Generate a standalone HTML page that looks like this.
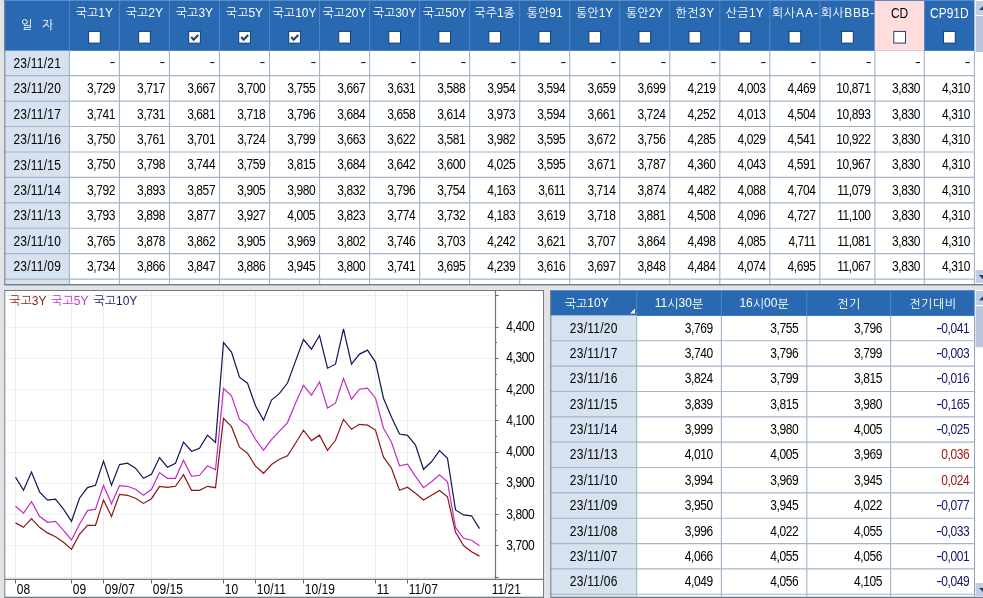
<!DOCTYPE html>
<html lang="ko"><head><meta charset="utf-8"><title>채권 금리</title>
<style>
html,body{margin:0;padding:0}
body{width:983px;height:598px;overflow:hidden;background:#e1e3e7;position:relative;font-family:"Liberation Sans","NanumGothic",sans-serif;font-size:12px;color:#000}
#w{position:absolute;left:0;top:0;width:983px;height:598px;will-change:transform}
#w>div,#w>svg{position:absolute}
.t{white-space:nowrap;overflow:visible;transform:scaleY(1.2)}
.k{transform:none}
.e{display:inline-block;transform:scaleY(1.14);transform-origin:50% 80%}
.hc{text-align:center;color:#fff}
.dk{color:#000}
.c{text-align:center}
.r{text-align:right}
.l{text-align:left}
.n{letter-spacing:-0.4px}
.m{display:inline-block;transform:scaleX(1.5);transform-origin:100% 50%;position:relative;top:-0.5px}
.d{letter-spacing:0.25px}
</style></head><body><div id="w">
<svg style="left:0;top:0" width="983" height="598" viewBox="0 0 983 598"><rect x="4.30" y="0.00" width="978.70" height="285.00" fill="#fff" />
<rect x="4.30" y="0.00" width="970.10" height="50.80" fill="#2969b1" />
<line x1="4.30" x2="974.40" y1="0.50" y2="0.50" stroke="#5b8cc6" stroke-width="1"/>
<rect x="4.30" y="50.80" width="65.10" height="233.50" fill="#d6e2ef" />
<line x1="69.40" x2="69.40" y1="1.00" y2="50.80" stroke="#4f86c6" stroke-width="1"/>
<line x1="119.43" x2="119.43" y1="1.00" y2="50.80" stroke="#4f86c6" stroke-width="1"/>
<line x1="169.46" x2="169.46" y1="1.00" y2="50.80" stroke="#4f86c6" stroke-width="1"/>
<line x1="219.49" x2="219.49" y1="1.00" y2="50.80" stroke="#4f86c6" stroke-width="1"/>
<line x1="269.52" x2="269.52" y1="1.00" y2="50.80" stroke="#4f86c6" stroke-width="1"/>
<line x1="319.55" x2="319.55" y1="1.00" y2="50.80" stroke="#4f86c6" stroke-width="1"/>
<line x1="369.58" x2="369.58" y1="1.00" y2="50.80" stroke="#4f86c6" stroke-width="1"/>
<line x1="419.61" x2="419.61" y1="1.00" y2="50.80" stroke="#4f86c6" stroke-width="1"/>
<line x1="469.64" x2="469.64" y1="1.00" y2="50.80" stroke="#4f86c6" stroke-width="1"/>
<line x1="519.67" x2="519.67" y1="1.00" y2="50.80" stroke="#4f86c6" stroke-width="1"/>
<line x1="569.70" x2="569.70" y1="1.00" y2="50.80" stroke="#4f86c6" stroke-width="1"/>
<line x1="619.73" x2="619.73" y1="1.00" y2="50.80" stroke="#4f86c6" stroke-width="1"/>
<line x1="669.76" x2="669.76" y1="1.00" y2="50.80" stroke="#4f86c6" stroke-width="1"/>
<line x1="719.79" x2="719.79" y1="1.00" y2="50.80" stroke="#4f86c6" stroke-width="1"/>
<line x1="769.82" x2="769.82" y1="1.00" y2="50.80" stroke="#4f86c6" stroke-width="1"/>
<line x1="819.85" x2="819.85" y1="1.00" y2="50.80" stroke="#4f86c6" stroke-width="1"/>
<line x1="874.90" x2="874.90" y1="1.00" y2="50.80" stroke="#4f86c6" stroke-width="1"/>
<line x1="924.30" x2="924.30" y1="1.00" y2="50.80" stroke="#4f86c6" stroke-width="1"/>
<rect x="874.70" y="1.00" width="49.40" height="49.80" fill="#ffdddd" />
<line x1="69.40" x2="69.40" y1="50.80" y2="284.30" stroke="#a2b5c9" stroke-width="1.15"/>
<line x1="119.43" x2="119.43" y1="50.80" y2="284.30" stroke="#a2b5c9" stroke-width="1.15"/>
<line x1="169.46" x2="169.46" y1="50.80" y2="284.30" stroke="#a2b5c9" stroke-width="1.15"/>
<line x1="219.49" x2="219.49" y1="50.80" y2="284.30" stroke="#a2b5c9" stroke-width="1.15"/>
<line x1="269.52" x2="269.52" y1="50.80" y2="284.30" stroke="#a2b5c9" stroke-width="1.15"/>
<line x1="319.55" x2="319.55" y1="50.80" y2="284.30" stroke="#a2b5c9" stroke-width="1.15"/>
<line x1="369.58" x2="369.58" y1="50.80" y2="284.30" stroke="#a2b5c9" stroke-width="1.15"/>
<line x1="419.61" x2="419.61" y1="50.80" y2="284.30" stroke="#a2b5c9" stroke-width="1.15"/>
<line x1="469.64" x2="469.64" y1="50.80" y2="284.30" stroke="#a2b5c9" stroke-width="1.15"/>
<line x1="519.67" x2="519.67" y1="50.80" y2="284.30" stroke="#a2b5c9" stroke-width="1.15"/>
<line x1="569.70" x2="569.70" y1="50.80" y2="284.30" stroke="#a2b5c9" stroke-width="1.15"/>
<line x1="619.73" x2="619.73" y1="50.80" y2="284.30" stroke="#a2b5c9" stroke-width="1.15"/>
<line x1="669.76" x2="669.76" y1="50.80" y2="284.30" stroke="#a2b5c9" stroke-width="1.15"/>
<line x1="719.79" x2="719.79" y1="50.80" y2="284.30" stroke="#a2b5c9" stroke-width="1.15"/>
<line x1="769.82" x2="769.82" y1="50.80" y2="284.30" stroke="#a2b5c9" stroke-width="1.15"/>
<line x1="819.85" x2="819.85" y1="50.80" y2="284.30" stroke="#a2b5c9" stroke-width="1.15"/>
<line x1="874.90" x2="874.90" y1="50.80" y2="284.30" stroke="#a2b5c9" stroke-width="1.15"/>
<line x1="924.30" x2="924.30" y1="50.80" y2="284.30" stroke="#a2b5c9" stroke-width="1.15"/>
<line x1="974.40" x2="974.40" y1="50.80" y2="284.30" stroke="#a2b5c9" stroke-width="1.15"/>
<line x1="4.30" x2="974.90" y1="75.68" y2="75.68" stroke="#a2b5c9" stroke-width="1.15"/>
<line x1="4.30" x2="974.90" y1="101.11" y2="101.11" stroke="#a2b5c9" stroke-width="1.15"/>
<line x1="4.30" x2="974.90" y1="126.54" y2="126.54" stroke="#a2b5c9" stroke-width="1.15"/>
<line x1="4.30" x2="974.90" y1="151.97" y2="151.97" stroke="#a2b5c9" stroke-width="1.15"/>
<line x1="4.30" x2="974.90" y1="177.40" y2="177.40" stroke="#a2b5c9" stroke-width="1.15"/>
<line x1="4.30" x2="974.90" y1="202.83" y2="202.83" stroke="#a2b5c9" stroke-width="1.15"/>
<line x1="4.30" x2="974.90" y1="228.26" y2="228.26" stroke="#a2b5c9" stroke-width="1.15"/>
<line x1="4.30" x2="974.90" y1="253.69" y2="253.69" stroke="#a2b5c9" stroke-width="1.15"/>
<line x1="4.30" x2="974.90" y1="279.12" y2="279.12" stroke="#a2b5c9" stroke-width="1.15"/>
<line x1="4.80" x2="4.80" y1="0.00" y2="285.00" stroke="#6d7b8b" stroke-width="1"/>
<rect x="4.30" y="284.00" width="978.70" height="1.40" fill="#6d7b8b" />
<rect x="88.62" y="31.40" width="11.7" height="11.7" fill="#fff" stroke="#173c70" stroke-width="1"/>
<rect x="138.64" y="31.40" width="11.7" height="11.7" fill="#fff" stroke="#173c70" stroke-width="1"/>
<rect x="188.68" y="31.40" width="11.7" height="11.7" fill="#fff" stroke="#173c70" stroke-width="1"/>
<path d="M191.18 37.10 l2.4 2.6 l4.6 -4.8" fill="none" stroke="#1d4576" stroke-width="2.2"/>
<rect x="238.70" y="31.40" width="11.7" height="11.7" fill="#fff" stroke="#173c70" stroke-width="1"/>
<path d="M241.20 37.10 l2.4 2.6 l4.6 -4.8" fill="none" stroke="#1d4576" stroke-width="2.2"/>
<rect x="288.73" y="31.40" width="11.7" height="11.7" fill="#fff" stroke="#173c70" stroke-width="1"/>
<path d="M291.23 37.10 l2.4 2.6 l4.6 -4.8" fill="none" stroke="#1d4576" stroke-width="2.2"/>
<rect x="338.77" y="31.40" width="11.7" height="11.7" fill="#fff" stroke="#173c70" stroke-width="1"/>
<rect x="388.80" y="31.40" width="11.7" height="11.7" fill="#fff" stroke="#173c70" stroke-width="1"/>
<rect x="438.82" y="31.40" width="11.7" height="11.7" fill="#fff" stroke="#173c70" stroke-width="1"/>
<rect x="488.85" y="31.40" width="11.7" height="11.7" fill="#fff" stroke="#173c70" stroke-width="1"/>
<rect x="538.88" y="31.40" width="11.7" height="11.7" fill="#fff" stroke="#173c70" stroke-width="1"/>
<rect x="588.92" y="31.40" width="11.7" height="11.7" fill="#fff" stroke="#173c70" stroke-width="1"/>
<rect x="638.95" y="31.40" width="11.7" height="11.7" fill="#fff" stroke="#173c70" stroke-width="1"/>
<rect x="688.98" y="31.40" width="11.7" height="11.7" fill="#fff" stroke="#173c70" stroke-width="1"/>
<rect x="739.01" y="31.40" width="11.7" height="11.7" fill="#fff" stroke="#173c70" stroke-width="1"/>
<rect x="789.04" y="31.40" width="11.7" height="11.7" fill="#fff" stroke="#173c70" stroke-width="1"/>
<rect x="841.58" y="31.40" width="11.7" height="11.7" fill="#fff" stroke="#173c70" stroke-width="1"/>
<rect x="893.80" y="31.40" width="11.7" height="11.7" fill="#fff" stroke="#1f3f6e" stroke-width="1"/>
<rect x="943.55" y="31.40" width="11.7" height="11.7" fill="#fff" stroke="#173c70" stroke-width="1"/>
<rect x="975.60" y="1.00" width="8.00" height="283.00" fill="#fff" />
<rect x="975.60" y="1.00" width="8.00" height="14.00" fill="#c3cce0" />
<rect x="975.60" y="16.00" width="8.00" height="36.00" fill="#b9c5dc" />
<rect x="975.60" y="270.00" width="8.00" height="13.00" fill="#c3cce0" />
<path d="M979 10 L983.5 5.5 L983.5 10 Z" fill="#2b3f63"/>
<path d="M978.7 275 L983.5 275 L983.5 279.8 Z" fill="#2b3f63"/>
<rect x="4.30" y="290.00" width="539.70" height="307.60" fill="#fff" />
<line x1="6" x2="494.5" y1="577.5" y2="577.5" stroke="#e2e2e2" stroke-width="1" stroke-dasharray="1 1" shape-rendering="crispEdges"/>
<line x1="6" x2="494.5" y1="545.5" y2="545.5" stroke="#e2e2e2" stroke-width="1" stroke-dasharray="1 1" shape-rendering="crispEdges"/>
<line x1="6" x2="494.5" y1="514.5" y2="514.5" stroke="#e2e2e2" stroke-width="1" stroke-dasharray="1 1" shape-rendering="crispEdges"/>
<line x1="6" x2="494.5" y1="483.5" y2="483.5" stroke="#e2e2e2" stroke-width="1" stroke-dasharray="1 1" shape-rendering="crispEdges"/>
<line x1="6" x2="494.5" y1="452.5" y2="452.5" stroke="#e2e2e2" stroke-width="1" stroke-dasharray="1 1" shape-rendering="crispEdges"/>
<line x1="6" x2="494.5" y1="420.5" y2="420.5" stroke="#e2e2e2" stroke-width="1" stroke-dasharray="1 1" shape-rendering="crispEdges"/>
<line x1="6" x2="494.5" y1="389.5" y2="389.5" stroke="#e2e2e2" stroke-width="1" stroke-dasharray="1 1" shape-rendering="crispEdges"/>
<line x1="6" x2="494.5" y1="358.5" y2="358.5" stroke="#e2e2e2" stroke-width="1" stroke-dasharray="1 1" shape-rendering="crispEdges"/>
<line x1="6" x2="494.5" y1="327.5" y2="327.5" stroke="#e2e2e2" stroke-width="1" stroke-dasharray="1 1" shape-rendering="crispEdges"/>
<line x1="6" x2="494.5" y1="295.5" y2="295.5" stroke="#e2e2e2" stroke-width="1" stroke-dasharray="1 1" shape-rendering="crispEdges"/>
<line x1="15.50" x2="15.50" y1="291.00" y2="579.30" stroke="#ebebeb" stroke-width="1"/>
<line x1="15.50" x2="15.50" y1="579.30" y2="583.50" stroke="#666" stroke-width="1"/>
<line x1="71.50" x2="71.50" y1="291.00" y2="579.30" stroke="#ebebeb" stroke-width="1"/>
<line x1="71.50" x2="71.50" y1="579.30" y2="583.50" stroke="#666" stroke-width="1"/>
<line x1="103.50" x2="103.50" y1="291.00" y2="579.30" stroke="#ebebeb" stroke-width="1"/>
<line x1="103.50" x2="103.50" y1="579.30" y2="583.50" stroke="#666" stroke-width="1"/>
<line x1="151.50" x2="151.50" y1="291.00" y2="579.30" stroke="#ebebeb" stroke-width="1"/>
<line x1="151.50" x2="151.50" y1="579.30" y2="583.50" stroke="#666" stroke-width="1"/>
<line x1="223.50" x2="223.50" y1="291.00" y2="579.30" stroke="#ebebeb" stroke-width="1"/>
<line x1="223.50" x2="223.50" y1="579.30" y2="583.50" stroke="#666" stroke-width="1"/>
<line x1="255.50" x2="255.50" y1="291.00" y2="579.30" stroke="#ebebeb" stroke-width="1"/>
<line x1="255.50" x2="255.50" y1="579.30" y2="583.50" stroke="#666" stroke-width="1"/>
<line x1="303.50" x2="303.50" y1="291.00" y2="579.30" stroke="#ebebeb" stroke-width="1"/>
<line x1="303.50" x2="303.50" y1="579.30" y2="583.50" stroke="#666" stroke-width="1"/>
<line x1="375.50" x2="375.50" y1="291.00" y2="579.30" stroke="#ebebeb" stroke-width="1"/>
<line x1="375.50" x2="375.50" y1="579.30" y2="583.50" stroke="#666" stroke-width="1"/>
<line x1="407.50" x2="407.50" y1="291.00" y2="579.30" stroke="#ebebeb" stroke-width="1"/>
<line x1="407.50" x2="407.50" y1="579.30" y2="583.50" stroke="#666" stroke-width="1"/>
<line x1="5.00" x2="543.00" y1="579.30" y2="579.30" stroke="#777" stroke-width="1.2"/>
<line x1="495.50" x2="495.50" y1="291.00" y2="579.30" stroke="#777" stroke-width="1.2"/>
<line x1="495.50" x2="498.70" y1="577.50" y2="577.50" stroke="#6a6a6a" stroke-width="1"/>
<line x1="495.50" x2="498.70" y1="545.50" y2="545.50" stroke="#6a6a6a" stroke-width="1"/>
<line x1="495.50" x2="497.00" y1="530.50" y2="530.50" stroke="#6a6a6a" stroke-width="1"/>
<line x1="495.50" x2="498.70" y1="514.50" y2="514.50" stroke="#6a6a6a" stroke-width="1"/>
<line x1="495.50" x2="497.00" y1="498.50" y2="498.50" stroke="#6a6a6a" stroke-width="1"/>
<line x1="495.50" x2="498.70" y1="483.50" y2="483.50" stroke="#6a6a6a" stroke-width="1"/>
<line x1="495.50" x2="497.00" y1="467.50" y2="467.50" stroke="#6a6a6a" stroke-width="1"/>
<line x1="495.50" x2="498.70" y1="452.50" y2="452.50" stroke="#6a6a6a" stroke-width="1"/>
<line x1="495.50" x2="497.00" y1="436.50" y2="436.50" stroke="#6a6a6a" stroke-width="1"/>
<line x1="495.50" x2="498.70" y1="420.50" y2="420.50" stroke="#6a6a6a" stroke-width="1"/>
<line x1="495.50" x2="497.00" y1="405.50" y2="405.50" stroke="#6a6a6a" stroke-width="1"/>
<line x1="495.50" x2="498.70" y1="389.50" y2="389.50" stroke="#6a6a6a" stroke-width="1"/>
<line x1="495.50" x2="497.00" y1="374.50" y2="374.50" stroke="#6a6a6a" stroke-width="1"/>
<line x1="495.50" x2="498.70" y1="358.50" y2="358.50" stroke="#6a6a6a" stroke-width="1"/>
<line x1="495.50" x2="497.00" y1="342.50" y2="342.50" stroke="#6a6a6a" stroke-width="1"/>
<line x1="495.50" x2="498.70" y1="327.50" y2="327.50" stroke="#6a6a6a" stroke-width="1"/>
<line x1="495.50" x2="498.70" y1="295.50" y2="295.50" stroke="#6a6a6a" stroke-width="1"/>
<polyline points="15.5,522.9 23.5,527.3 31.5,518.7 39.5,527.3 47.5,532.9 55.5,536.7 63.5,542.3 71.5,549.4 79.5,534.3 87.5,525.3 95.5,525.3 103.5,500.1 111.5,516.4 119.5,494.3 127.5,495.3 135.5,498.3 143.5,503.4 151.5,498.7 159.5,486.3 167.5,487.3 175.5,486.3 183.5,474.7 191.5,490.3 199.5,490.3 207.5,486.3 215.5,487.7 223.5,418.4 231.5,426.7 239.5,447.2 247.5,453.2 255.5,466.1 263.5,473.3 271.5,464.5 279.5,459.3 287.5,455.7 295.5,443.2 303.5,430.2 311.5,440.6 319.5,435.2 327.5,450.3 335.5,440.3 343.5,419.4 351.5,429.3 359.5,424.3 367.5,425.2 375.5,430.1 383.5,457.2 391.5,468.2 399.5,490.3 407.5,487.3 415.5,493.3 423.5,499.9 431.5,495.2 439.5,490.5 447.5,496.8 455.5,532.1 463.5,545.5 471.5,551.7 479.5,556.1" fill="none" stroke="#881818" stroke-width="1.2" stroke-linejoin="miter"/>
<polyline points="15.5,506.2 23.5,513.2 31.5,501.6 39.5,516.3 47.5,522.3 55.5,521.3 63.5,530.3 71.5,539.9 79.5,524.3 87.5,510.6 95.5,509.2 103.5,485.5 111.5,503.8 119.5,485.7 127.5,486.3 135.5,489.3 143.5,495.3 151.5,489.3 159.5,472.6 167.5,478.3 175.5,478.3 183.5,460.2 191.5,476.3 199.5,475.3 207.5,465.8 215.5,469.8 223.5,388.6 231.5,395.9 239.5,419.4 247.5,425.2 255.5,439.5 263.5,450.2 271.5,439.7 279.5,431.2 287.5,422.6 295.5,403.2 303.5,385.3 311.5,395.2 319.5,381.9 327.5,408.0 335.5,403.2 343.5,378.5 351.5,399.2 359.5,389.2 367.5,388.2 375.5,398.2 383.5,428.2 391.5,442.2 399.5,465.8 407.5,464.2 415.5,476.3 423.5,487.7 431.5,481.8 439.5,474.9 447.5,481.8 455.5,527.4 463.5,538.3 471.5,540.2 479.5,545.8" fill="none" stroke="#c22cc4" stroke-width="1.2" stroke-linejoin="miter"/>
<polyline points="15.5,477.1 23.5,490.2 31.5,472.1 39.5,491.8 47.5,500.2 55.5,499.2 63.5,509.2 71.5,521.3 79.5,498.2 87.5,487.6 95.5,485.2 103.5,461.1 111.5,485.3 119.5,464.6 127.5,463.2 135.5,468.2 143.5,478.3 151.5,474.3 159.5,457.6 167.5,467.2 175.5,463.2 183.5,442.1 191.5,451.2 199.5,448.2 207.5,435.1 215.5,442.5 223.5,342.5 231.5,352.1 239.5,377.2 247.5,383.2 255.5,405.7 263.5,420.1 271.5,400.0 279.5,393.4 287.5,383.0 295.5,361.1 303.5,339.5 311.5,349.1 319.5,335.5 327.5,368.2 335.5,364.2 343.5,329.0 351.5,364.1 359.5,354.1 367.5,350.1 375.5,362.1 383.5,398.2 391.5,417.2 399.5,434.0 407.5,435.4 415.5,445.0 423.5,469.3 431.5,461.8 439.5,450.6 447.5,458.4 455.5,509.9 463.5,514.9 471.5,515.8 479.5,528.6" fill="none" stroke="#151556" stroke-width="1.2" stroke-linejoin="miter"/>
<line x1="4.80" x2="4.80" y1="290.00" y2="597.60" stroke="#6d7b8b" stroke-width="1"/>
<line x1="543.50" x2="543.50" y1="290.00" y2="597.60" stroke="#6d7b8b" stroke-width="1"/>
<line x1="4.30" x2="544.00" y1="290.50" y2="290.50" stroke="#6d7b8b" stroke-width="1"/>
<rect x="4.30" y="596.70" width="539.70" height="1.30" fill="#6d7b8b" />
<rect x="550.30" y="290.00" width="432.70" height="307.60" fill="#fff" />
<rect x="550.30" y="290.00" width="424.30" height="25.90" fill="#2969b1" />
<line x1="550.30" x2="974.60" y1="290.50" y2="290.50" stroke="#5b8cc6" stroke-width="1"/>
<rect x="550.30" y="315.40" width="86.40" height="280.90" fill="#d6e2ef" />
<line x1="636.70" x2="636.70" y1="291.00" y2="315.40" stroke="#4f86c6" stroke-width="1"/>
<line x1="721.40" x2="721.40" y1="291.00" y2="315.40" stroke="#4f86c6" stroke-width="1"/>
<line x1="806.80" x2="806.80" y1="291.00" y2="315.40" stroke="#4f86c6" stroke-width="1"/>
<line x1="890.60" x2="890.60" y1="291.00" y2="315.40" stroke="#4f86c6" stroke-width="1"/>
<line x1="636.70" x2="636.70" y1="315.40" y2="596.30" stroke="#a2b5c9" stroke-width="1.15"/>
<line x1="721.40" x2="721.40" y1="315.40" y2="596.30" stroke="#a2b5c9" stroke-width="1.15"/>
<line x1="806.80" x2="806.80" y1="315.40" y2="596.30" stroke="#a2b5c9" stroke-width="1.15"/>
<line x1="890.60" x2="890.60" y1="315.40" y2="596.30" stroke="#a2b5c9" stroke-width="1.15"/>
<line x1="974.60" x2="974.60" y1="315.40" y2="596.30" stroke="#8a9bb0" stroke-width="1"/>
<line x1="550.30" x2="974.60" y1="340.75" y2="340.75" stroke="#a2b5c9" stroke-width="1.15"/>
<line x1="550.30" x2="974.60" y1="366.10" y2="366.10" stroke="#a2b5c9" stroke-width="1.15"/>
<line x1="550.30" x2="974.60" y1="391.45" y2="391.45" stroke="#a2b5c9" stroke-width="1.15"/>
<line x1="550.30" x2="974.60" y1="416.80" y2="416.80" stroke="#a2b5c9" stroke-width="1.15"/>
<line x1="550.30" x2="974.60" y1="442.15" y2="442.15" stroke="#a2b5c9" stroke-width="1.15"/>
<line x1="550.30" x2="974.60" y1="467.50" y2="467.50" stroke="#a2b5c9" stroke-width="1.15"/>
<line x1="550.30" x2="974.60" y1="492.85" y2="492.85" stroke="#a2b5c9" stroke-width="1.15"/>
<line x1="550.30" x2="974.60" y1="518.20" y2="518.20" stroke="#a2b5c9" stroke-width="1.15"/>
<line x1="550.30" x2="974.60" y1="543.55" y2="543.55" stroke="#a2b5c9" stroke-width="1.15"/>
<line x1="550.30" x2="974.60" y1="568.90" y2="568.90" stroke="#a2b5c9" stroke-width="1.15"/>
<line x1="550.30" x2="974.60" y1="594.25" y2="594.25" stroke="#a2b5c9" stroke-width="1.15"/>
<line x1="550.80" x2="550.80" y1="290.00" y2="597.60" stroke="#6d7b8b" stroke-width="1"/>
<rect x="550.30" y="596.70" width="432.70" height="1.30" fill="#6d7b8b" />
<path d="M630 313.5 L635 313.5 L635 308.5 Z" fill="#fff"/>
<rect x="975.60" y="291.00" width="8.00" height="305.30" fill="#fff" />
<rect x="975.60" y="291.00" width="8.00" height="14.00" fill="#c3cce0" />
<rect x="975.60" y="306.20" width="8.00" height="41.00" fill="#b9c5dc" />
<rect x="975.60" y="583.00" width="8.00" height="13.30" fill="#c3cce0" />
<path d="M979 300.2 L983.5 295.7 L983.5 300.2 Z" fill="#2b3f63"/>
<path d="M979 588 L983.5 588 L983.5 592.5 Z" fill="#2b3f63"/></svg>
<div class="t hc k" style="left:5.30px;top:12.30px;width:64.00px;height:26.00px;line-height:26.00px;word-spacing:6.5px;">일 자</div>
<div class="t hc k" style="left:59.40px;top:6.40px;width:70.03px;height:14.00px;line-height:14.00px;">국고<span class="e">1Y</span></div>
<div class="t hc k" style="left:109.43px;top:6.40px;width:70.03px;height:14.00px;line-height:14.00px;">국고<span class="e">2Y</span></div>
<div class="t hc k" style="left:159.46px;top:6.40px;width:70.03px;height:14.00px;line-height:14.00px;">국고<span class="e">3Y</span></div>
<div class="t hc k" style="left:209.49px;top:6.40px;width:70.03px;height:14.00px;line-height:14.00px;">국고<span class="e">5Y</span></div>
<div class="t hc k" style="left:259.52px;top:6.40px;width:70.03px;height:14.00px;line-height:14.00px;">국고<span class="e">10Y</span></div>
<div class="t hc k" style="left:309.55px;top:6.40px;width:70.03px;height:14.00px;line-height:14.00px;">국고<span class="e">20Y</span></div>
<div class="t hc k" style="left:359.58px;top:6.40px;width:70.03px;height:14.00px;line-height:14.00px;">국고<span class="e">30Y</span></div>
<div class="t hc k" style="left:409.61px;top:6.40px;width:70.03px;height:14.00px;line-height:14.00px;">국고<span class="e">50Y</span></div>
<div class="t hc k" style="left:459.64px;top:6.40px;width:70.03px;height:14.00px;line-height:14.00px;">국주<span class="e">1</span>종</div>
<div class="t hc k" style="left:509.67px;top:6.40px;width:70.03px;height:14.00px;line-height:14.00px;">통안<span class="e">91</span></div>
<div class="t hc k" style="left:559.70px;top:6.40px;width:70.03px;height:14.00px;line-height:14.00px;">통안<span class="e">1Y</span></div>
<div class="t hc k" style="left:609.73px;top:6.40px;width:70.03px;height:14.00px;line-height:14.00px;">통안<span class="e">2Y</span></div>
<div class="t hc k" style="left:660.06px;top:6.40px;width:70.03px;height:14.00px;line-height:14.00px;letter-spacing:0.6px;">한전<span class="e">3Y</span></div>
<div class="t hc k" style="left:709.94px;top:6.40px;width:70.03px;height:14.00px;line-height:14.00px;letter-spacing:0.3px;">산금<span class="e">1Y</span></div>
<div class="t hc k" style="left:760.27px;top:6.40px;width:70.03px;height:14.00px;line-height:14.00px;letter-spacing:0.9px;">회사<span class="e">AA-</span></div>
<div class="t hc k" style="left:810.12px;top:6.40px;width:75.05px;height:14.00px;line-height:14.00px;letter-spacing:0.55px;">회사<span class="e">BBB-</span></div>
<div class="t hc dk" style="left:864.90px;top:6.40px;width:69.40px;height:14.00px;line-height:14.00px;">CD</div>
<div class="t hc" style="left:914.30px;top:6.40px;width:70.10px;height:14.00px;line-height:14.00px;">CP91D</div>
<div class="t c d" style="left:5.30px;top:50.85px;width:64.00px;height:25.43px;line-height:25.43px;">23/11/21</div>
<div class="t r" style="left:69.40px;top:49.65px;width:46.43px;height:25.43px;line-height:25.43px;transform:scaleX(1.45);transform-origin:100% 50%;">-</div>
<div class="t r" style="left:119.43px;top:49.65px;width:46.43px;height:25.43px;line-height:25.43px;transform:scaleX(1.45);transform-origin:100% 50%;">-</div>
<div class="t r" style="left:169.46px;top:49.65px;width:46.43px;height:25.43px;line-height:25.43px;transform:scaleX(1.45);transform-origin:100% 50%;">-</div>
<div class="t r" style="left:219.49px;top:49.65px;width:46.43px;height:25.43px;line-height:25.43px;transform:scaleX(1.45);transform-origin:100% 50%;">-</div>
<div class="t r" style="left:269.52px;top:49.65px;width:46.43px;height:25.43px;line-height:25.43px;transform:scaleX(1.45);transform-origin:100% 50%;">-</div>
<div class="t r" style="left:319.55px;top:49.65px;width:46.43px;height:25.43px;line-height:25.43px;transform:scaleX(1.45);transform-origin:100% 50%;">-</div>
<div class="t r" style="left:369.58px;top:49.65px;width:46.43px;height:25.43px;line-height:25.43px;transform:scaleX(1.45);transform-origin:100% 50%;">-</div>
<div class="t r" style="left:419.61px;top:49.65px;width:46.43px;height:25.43px;line-height:25.43px;transform:scaleX(1.45);transform-origin:100% 50%;">-</div>
<div class="t r" style="left:469.64px;top:49.65px;width:46.43px;height:25.43px;line-height:25.43px;transform:scaleX(1.45);transform-origin:100% 50%;">-</div>
<div class="t r" style="left:519.67px;top:49.65px;width:46.43px;height:25.43px;line-height:25.43px;transform:scaleX(1.45);transform-origin:100% 50%;">-</div>
<div class="t r" style="left:569.70px;top:49.65px;width:46.43px;height:25.43px;line-height:25.43px;transform:scaleX(1.45);transform-origin:100% 50%;">-</div>
<div class="t r" style="left:619.73px;top:49.65px;width:46.43px;height:25.43px;line-height:25.43px;transform:scaleX(1.45);transform-origin:100% 50%;">-</div>
<div class="t r" style="left:669.76px;top:49.65px;width:46.43px;height:25.43px;line-height:25.43px;transform:scaleX(1.45);transform-origin:100% 50%;">-</div>
<div class="t r" style="left:719.79px;top:49.65px;width:46.43px;height:25.43px;line-height:25.43px;transform:scaleX(1.45);transform-origin:100% 50%;">-</div>
<div class="t r" style="left:769.82px;top:49.65px;width:46.43px;height:25.43px;line-height:25.43px;transform:scaleX(1.45);transform-origin:100% 50%;">-</div>
<div class="t r" style="left:819.85px;top:49.65px;width:51.45px;height:25.43px;line-height:25.43px;transform:scaleX(1.45);transform-origin:100% 50%;">-</div>
<div class="t r" style="left:874.90px;top:49.65px;width:45.80px;height:25.43px;line-height:25.43px;transform:scaleX(1.45);transform-origin:100% 50%;">-</div>
<div class="t r" style="left:924.30px;top:49.65px;width:46.50px;height:25.43px;line-height:25.43px;transform:scaleX(1.45);transform-origin:100% 50%;">-</div>
<div class="t c d" style="left:5.30px;top:76.28px;width:64.00px;height:25.43px;line-height:25.43px;">23/11/20</div>
<div class="t r n" style="left:69.40px;top:76.08px;width:45.73px;height:25.43px;line-height:25.43px;">3,729</div>
<div class="t r n" style="left:119.43px;top:76.08px;width:45.73px;height:25.43px;line-height:25.43px;">3,717</div>
<div class="t r n" style="left:169.46px;top:76.08px;width:45.73px;height:25.43px;line-height:25.43px;">3,667</div>
<div class="t r n" style="left:219.49px;top:76.08px;width:45.73px;height:25.43px;line-height:25.43px;">3,700</div>
<div class="t r n" style="left:269.52px;top:76.08px;width:45.73px;height:25.43px;line-height:25.43px;">3,755</div>
<div class="t r n" style="left:319.55px;top:76.08px;width:45.73px;height:25.43px;line-height:25.43px;">3,667</div>
<div class="t r n" style="left:369.58px;top:76.08px;width:45.73px;height:25.43px;line-height:25.43px;">3,631</div>
<div class="t r n" style="left:419.61px;top:76.08px;width:45.73px;height:25.43px;line-height:25.43px;">3,588</div>
<div class="t r n" style="left:469.64px;top:76.08px;width:45.73px;height:25.43px;line-height:25.43px;">3,954</div>
<div class="t r n" style="left:519.67px;top:76.08px;width:45.73px;height:25.43px;line-height:25.43px;">3,594</div>
<div class="t r n" style="left:569.70px;top:76.08px;width:45.73px;height:25.43px;line-height:25.43px;">3,659</div>
<div class="t r n" style="left:619.73px;top:76.08px;width:45.73px;height:25.43px;line-height:25.43px;">3,699</div>
<div class="t r n" style="left:669.76px;top:76.08px;width:45.73px;height:25.43px;line-height:25.43px;">4,219</div>
<div class="t r n" style="left:719.79px;top:76.08px;width:45.73px;height:25.43px;line-height:25.43px;">4,003</div>
<div class="t r n" style="left:769.82px;top:76.08px;width:45.73px;height:25.43px;line-height:25.43px;">4,469</div>
<div class="t r n" style="left:819.85px;top:76.08px;width:50.75px;height:25.43px;line-height:25.43px;">10,871</div>
<div class="t r n" style="left:874.90px;top:76.08px;width:45.10px;height:25.43px;line-height:25.43px;">3,830</div>
<div class="t r n" style="left:924.30px;top:76.08px;width:45.80px;height:25.43px;line-height:25.43px;">4,310</div>
<div class="t c d" style="left:5.30px;top:101.71px;width:64.00px;height:25.43px;line-height:25.43px;">23/11/17</div>
<div class="t r n" style="left:69.40px;top:101.51px;width:45.73px;height:25.43px;line-height:25.43px;">3,741</div>
<div class="t r n" style="left:119.43px;top:101.51px;width:45.73px;height:25.43px;line-height:25.43px;">3,731</div>
<div class="t r n" style="left:169.46px;top:101.51px;width:45.73px;height:25.43px;line-height:25.43px;">3,681</div>
<div class="t r n" style="left:219.49px;top:101.51px;width:45.73px;height:25.43px;line-height:25.43px;">3,718</div>
<div class="t r n" style="left:269.52px;top:101.51px;width:45.73px;height:25.43px;line-height:25.43px;">3,796</div>
<div class="t r n" style="left:319.55px;top:101.51px;width:45.73px;height:25.43px;line-height:25.43px;">3,684</div>
<div class="t r n" style="left:369.58px;top:101.51px;width:45.73px;height:25.43px;line-height:25.43px;">3,658</div>
<div class="t r n" style="left:419.61px;top:101.51px;width:45.73px;height:25.43px;line-height:25.43px;">3,614</div>
<div class="t r n" style="left:469.64px;top:101.51px;width:45.73px;height:25.43px;line-height:25.43px;">3,973</div>
<div class="t r n" style="left:519.67px;top:101.51px;width:45.73px;height:25.43px;line-height:25.43px;">3,594</div>
<div class="t r n" style="left:569.70px;top:101.51px;width:45.73px;height:25.43px;line-height:25.43px;">3,661</div>
<div class="t r n" style="left:619.73px;top:101.51px;width:45.73px;height:25.43px;line-height:25.43px;">3,724</div>
<div class="t r n" style="left:669.76px;top:101.51px;width:45.73px;height:25.43px;line-height:25.43px;">4,252</div>
<div class="t r n" style="left:719.79px;top:101.51px;width:45.73px;height:25.43px;line-height:25.43px;">4,013</div>
<div class="t r n" style="left:769.82px;top:101.51px;width:45.73px;height:25.43px;line-height:25.43px;">4,504</div>
<div class="t r n" style="left:819.85px;top:101.51px;width:50.75px;height:25.43px;line-height:25.43px;">10,893</div>
<div class="t r n" style="left:874.90px;top:101.51px;width:45.10px;height:25.43px;line-height:25.43px;">3,830</div>
<div class="t r n" style="left:924.30px;top:101.51px;width:45.80px;height:25.43px;line-height:25.43px;">4,310</div>
<div class="t c d" style="left:5.30px;top:127.14px;width:64.00px;height:25.43px;line-height:25.43px;">23/11/16</div>
<div class="t r n" style="left:69.40px;top:126.94px;width:45.73px;height:25.43px;line-height:25.43px;">3,750</div>
<div class="t r n" style="left:119.43px;top:126.94px;width:45.73px;height:25.43px;line-height:25.43px;">3,761</div>
<div class="t r n" style="left:169.46px;top:126.94px;width:45.73px;height:25.43px;line-height:25.43px;">3,701</div>
<div class="t r n" style="left:219.49px;top:126.94px;width:45.73px;height:25.43px;line-height:25.43px;">3,724</div>
<div class="t r n" style="left:269.52px;top:126.94px;width:45.73px;height:25.43px;line-height:25.43px;">3,799</div>
<div class="t r n" style="left:319.55px;top:126.94px;width:45.73px;height:25.43px;line-height:25.43px;">3,663</div>
<div class="t r n" style="left:369.58px;top:126.94px;width:45.73px;height:25.43px;line-height:25.43px;">3,622</div>
<div class="t r n" style="left:419.61px;top:126.94px;width:45.73px;height:25.43px;line-height:25.43px;">3,581</div>
<div class="t r n" style="left:469.64px;top:126.94px;width:45.73px;height:25.43px;line-height:25.43px;">3,982</div>
<div class="t r n" style="left:519.67px;top:126.94px;width:45.73px;height:25.43px;line-height:25.43px;">3,595</div>
<div class="t r n" style="left:569.70px;top:126.94px;width:45.73px;height:25.43px;line-height:25.43px;">3,672</div>
<div class="t r n" style="left:619.73px;top:126.94px;width:45.73px;height:25.43px;line-height:25.43px;">3,756</div>
<div class="t r n" style="left:669.76px;top:126.94px;width:45.73px;height:25.43px;line-height:25.43px;">4,285</div>
<div class="t r n" style="left:719.79px;top:126.94px;width:45.73px;height:25.43px;line-height:25.43px;">4,029</div>
<div class="t r n" style="left:769.82px;top:126.94px;width:45.73px;height:25.43px;line-height:25.43px;">4,541</div>
<div class="t r n" style="left:819.85px;top:126.94px;width:50.75px;height:25.43px;line-height:25.43px;">10,922</div>
<div class="t r n" style="left:874.90px;top:126.94px;width:45.10px;height:25.43px;line-height:25.43px;">3,830</div>
<div class="t r n" style="left:924.30px;top:126.94px;width:45.80px;height:25.43px;line-height:25.43px;">4,310</div>
<div class="t c d" style="left:5.30px;top:152.57px;width:64.00px;height:25.43px;line-height:25.43px;">23/11/15</div>
<div class="t r n" style="left:69.40px;top:152.37px;width:45.73px;height:25.43px;line-height:25.43px;">3,750</div>
<div class="t r n" style="left:119.43px;top:152.37px;width:45.73px;height:25.43px;line-height:25.43px;">3,798</div>
<div class="t r n" style="left:169.46px;top:152.37px;width:45.73px;height:25.43px;line-height:25.43px;">3,744</div>
<div class="t r n" style="left:219.49px;top:152.37px;width:45.73px;height:25.43px;line-height:25.43px;">3,759</div>
<div class="t r n" style="left:269.52px;top:152.37px;width:45.73px;height:25.43px;line-height:25.43px;">3,815</div>
<div class="t r n" style="left:319.55px;top:152.37px;width:45.73px;height:25.43px;line-height:25.43px;">3,684</div>
<div class="t r n" style="left:369.58px;top:152.37px;width:45.73px;height:25.43px;line-height:25.43px;">3,642</div>
<div class="t r n" style="left:419.61px;top:152.37px;width:45.73px;height:25.43px;line-height:25.43px;">3,600</div>
<div class="t r n" style="left:469.64px;top:152.37px;width:45.73px;height:25.43px;line-height:25.43px;">4,025</div>
<div class="t r n" style="left:519.67px;top:152.37px;width:45.73px;height:25.43px;line-height:25.43px;">3,595</div>
<div class="t r n" style="left:569.70px;top:152.37px;width:45.73px;height:25.43px;line-height:25.43px;">3,671</div>
<div class="t r n" style="left:619.73px;top:152.37px;width:45.73px;height:25.43px;line-height:25.43px;">3,787</div>
<div class="t r n" style="left:669.76px;top:152.37px;width:45.73px;height:25.43px;line-height:25.43px;">4,360</div>
<div class="t r n" style="left:719.79px;top:152.37px;width:45.73px;height:25.43px;line-height:25.43px;">4,043</div>
<div class="t r n" style="left:769.82px;top:152.37px;width:45.73px;height:25.43px;line-height:25.43px;">4,591</div>
<div class="t r n" style="left:819.85px;top:152.37px;width:50.75px;height:25.43px;line-height:25.43px;">10,967</div>
<div class="t r n" style="left:874.90px;top:152.37px;width:45.10px;height:25.43px;line-height:25.43px;">3,830</div>
<div class="t r n" style="left:924.30px;top:152.37px;width:45.80px;height:25.43px;line-height:25.43px;">4,310</div>
<div class="t c d" style="left:5.30px;top:178.00px;width:64.00px;height:25.43px;line-height:25.43px;">23/11/14</div>
<div class="t r n" style="left:69.40px;top:177.80px;width:45.73px;height:25.43px;line-height:25.43px;">3,792</div>
<div class="t r n" style="left:119.43px;top:177.80px;width:45.73px;height:25.43px;line-height:25.43px;">3,893</div>
<div class="t r n" style="left:169.46px;top:177.80px;width:45.73px;height:25.43px;line-height:25.43px;">3,857</div>
<div class="t r n" style="left:219.49px;top:177.80px;width:45.73px;height:25.43px;line-height:25.43px;">3,905</div>
<div class="t r n" style="left:269.52px;top:177.80px;width:45.73px;height:25.43px;line-height:25.43px;">3,980</div>
<div class="t r n" style="left:319.55px;top:177.80px;width:45.73px;height:25.43px;line-height:25.43px;">3,832</div>
<div class="t r n" style="left:369.58px;top:177.80px;width:45.73px;height:25.43px;line-height:25.43px;">3,796</div>
<div class="t r n" style="left:419.61px;top:177.80px;width:45.73px;height:25.43px;line-height:25.43px;">3,754</div>
<div class="t r n" style="left:469.64px;top:177.80px;width:45.73px;height:25.43px;line-height:25.43px;">4,163</div>
<div class="t r n" style="left:519.67px;top:177.80px;width:45.73px;height:25.43px;line-height:25.43px;">3,611</div>
<div class="t r n" style="left:569.70px;top:177.80px;width:45.73px;height:25.43px;line-height:25.43px;">3,714</div>
<div class="t r n" style="left:619.73px;top:177.80px;width:45.73px;height:25.43px;line-height:25.43px;">3,874</div>
<div class="t r n" style="left:669.76px;top:177.80px;width:45.73px;height:25.43px;line-height:25.43px;">4,482</div>
<div class="t r n" style="left:719.79px;top:177.80px;width:45.73px;height:25.43px;line-height:25.43px;">4,088</div>
<div class="t r n" style="left:769.82px;top:177.80px;width:45.73px;height:25.43px;line-height:25.43px;">4,704</div>
<div class="t r n" style="left:819.85px;top:177.80px;width:50.75px;height:25.43px;line-height:25.43px;">11,079</div>
<div class="t r n" style="left:874.90px;top:177.80px;width:45.10px;height:25.43px;line-height:25.43px;">3,830</div>
<div class="t r n" style="left:924.30px;top:177.80px;width:45.80px;height:25.43px;line-height:25.43px;">4,310</div>
<div class="t c d" style="left:5.30px;top:203.43px;width:64.00px;height:25.43px;line-height:25.43px;">23/11/13</div>
<div class="t r n" style="left:69.40px;top:203.23px;width:45.73px;height:25.43px;line-height:25.43px;">3,793</div>
<div class="t r n" style="left:119.43px;top:203.23px;width:45.73px;height:25.43px;line-height:25.43px;">3,898</div>
<div class="t r n" style="left:169.46px;top:203.23px;width:45.73px;height:25.43px;line-height:25.43px;">3,877</div>
<div class="t r n" style="left:219.49px;top:203.23px;width:45.73px;height:25.43px;line-height:25.43px;">3,927</div>
<div class="t r n" style="left:269.52px;top:203.23px;width:45.73px;height:25.43px;line-height:25.43px;">4,005</div>
<div class="t r n" style="left:319.55px;top:203.23px;width:45.73px;height:25.43px;line-height:25.43px;">3,823</div>
<div class="t r n" style="left:369.58px;top:203.23px;width:45.73px;height:25.43px;line-height:25.43px;">3,774</div>
<div class="t r n" style="left:419.61px;top:203.23px;width:45.73px;height:25.43px;line-height:25.43px;">3,732</div>
<div class="t r n" style="left:469.64px;top:203.23px;width:45.73px;height:25.43px;line-height:25.43px;">4,183</div>
<div class="t r n" style="left:519.67px;top:203.23px;width:45.73px;height:25.43px;line-height:25.43px;">3,619</div>
<div class="t r n" style="left:569.70px;top:203.23px;width:45.73px;height:25.43px;line-height:25.43px;">3,718</div>
<div class="t r n" style="left:619.73px;top:203.23px;width:45.73px;height:25.43px;line-height:25.43px;">3,881</div>
<div class="t r n" style="left:669.76px;top:203.23px;width:45.73px;height:25.43px;line-height:25.43px;">4,508</div>
<div class="t r n" style="left:719.79px;top:203.23px;width:45.73px;height:25.43px;line-height:25.43px;">4,096</div>
<div class="t r n" style="left:769.82px;top:203.23px;width:45.73px;height:25.43px;line-height:25.43px;">4,727</div>
<div class="t r n" style="left:819.85px;top:203.23px;width:50.75px;height:25.43px;line-height:25.43px;">11,100</div>
<div class="t r n" style="left:874.90px;top:203.23px;width:45.10px;height:25.43px;line-height:25.43px;">3,830</div>
<div class="t r n" style="left:924.30px;top:203.23px;width:45.80px;height:25.43px;line-height:25.43px;">4,310</div>
<div class="t c d" style="left:5.30px;top:228.86px;width:64.00px;height:25.43px;line-height:25.43px;">23/11/10</div>
<div class="t r n" style="left:69.40px;top:228.66px;width:45.73px;height:25.43px;line-height:25.43px;">3,765</div>
<div class="t r n" style="left:119.43px;top:228.66px;width:45.73px;height:25.43px;line-height:25.43px;">3,878</div>
<div class="t r n" style="left:169.46px;top:228.66px;width:45.73px;height:25.43px;line-height:25.43px;">3,862</div>
<div class="t r n" style="left:219.49px;top:228.66px;width:45.73px;height:25.43px;line-height:25.43px;">3,905</div>
<div class="t r n" style="left:269.52px;top:228.66px;width:45.73px;height:25.43px;line-height:25.43px;">3,969</div>
<div class="t r n" style="left:319.55px;top:228.66px;width:45.73px;height:25.43px;line-height:25.43px;">3,802</div>
<div class="t r n" style="left:369.58px;top:228.66px;width:45.73px;height:25.43px;line-height:25.43px;">3,746</div>
<div class="t r n" style="left:419.61px;top:228.66px;width:45.73px;height:25.43px;line-height:25.43px;">3,703</div>
<div class="t r n" style="left:469.64px;top:228.66px;width:45.73px;height:25.43px;line-height:25.43px;">4,242</div>
<div class="t r n" style="left:519.67px;top:228.66px;width:45.73px;height:25.43px;line-height:25.43px;">3,621</div>
<div class="t r n" style="left:569.70px;top:228.66px;width:45.73px;height:25.43px;line-height:25.43px;">3,707</div>
<div class="t r n" style="left:619.73px;top:228.66px;width:45.73px;height:25.43px;line-height:25.43px;">3,864</div>
<div class="t r n" style="left:669.76px;top:228.66px;width:45.73px;height:25.43px;line-height:25.43px;">4,498</div>
<div class="t r n" style="left:719.79px;top:228.66px;width:45.73px;height:25.43px;line-height:25.43px;">4,085</div>
<div class="t r n" style="left:769.82px;top:228.66px;width:45.73px;height:25.43px;line-height:25.43px;">4,711</div>
<div class="t r n" style="left:819.85px;top:228.66px;width:50.75px;height:25.43px;line-height:25.43px;">11,081</div>
<div class="t r n" style="left:874.90px;top:228.66px;width:45.10px;height:25.43px;line-height:25.43px;">3,830</div>
<div class="t r n" style="left:924.30px;top:228.66px;width:45.80px;height:25.43px;line-height:25.43px;">4,310</div>
<div class="t c d" style="left:5.30px;top:254.29px;width:64.00px;height:25.43px;line-height:25.43px;">23/11/09</div>
<div class="t r n" style="left:69.40px;top:254.09px;width:45.73px;height:25.43px;line-height:25.43px;">3,734</div>
<div class="t r n" style="left:119.43px;top:254.09px;width:45.73px;height:25.43px;line-height:25.43px;">3,866</div>
<div class="t r n" style="left:169.46px;top:254.09px;width:45.73px;height:25.43px;line-height:25.43px;">3,847</div>
<div class="t r n" style="left:219.49px;top:254.09px;width:45.73px;height:25.43px;line-height:25.43px;">3,886</div>
<div class="t r n" style="left:269.52px;top:254.09px;width:45.73px;height:25.43px;line-height:25.43px;">3,945</div>
<div class="t r n" style="left:319.55px;top:254.09px;width:45.73px;height:25.43px;line-height:25.43px;">3,800</div>
<div class="t r n" style="left:369.58px;top:254.09px;width:45.73px;height:25.43px;line-height:25.43px;">3,741</div>
<div class="t r n" style="left:419.61px;top:254.09px;width:45.73px;height:25.43px;line-height:25.43px;">3,695</div>
<div class="t r n" style="left:469.64px;top:254.09px;width:45.73px;height:25.43px;line-height:25.43px;">4,239</div>
<div class="t r n" style="left:519.67px;top:254.09px;width:45.73px;height:25.43px;line-height:25.43px;">3,616</div>
<div class="t r n" style="left:569.70px;top:254.09px;width:45.73px;height:25.43px;line-height:25.43px;">3,697</div>
<div class="t r n" style="left:619.73px;top:254.09px;width:45.73px;height:25.43px;line-height:25.43px;">3,848</div>
<div class="t r n" style="left:669.76px;top:254.09px;width:45.73px;height:25.43px;line-height:25.43px;">4,484</div>
<div class="t r n" style="left:719.79px;top:254.09px;width:45.73px;height:25.43px;line-height:25.43px;">4,074</div>
<div class="t r n" style="left:769.82px;top:254.09px;width:45.73px;height:25.43px;line-height:25.43px;">4,695</div>
<div class="t r n" style="left:819.85px;top:254.09px;width:50.75px;height:25.43px;line-height:25.43px;">11,067</div>
<div class="t r n" style="left:874.90px;top:254.09px;width:45.10px;height:25.43px;line-height:25.43px;">3,830</div>
<div class="t r n" style="left:924.30px;top:254.09px;width:45.80px;height:25.43px;line-height:25.43px;">4,310</div>
<div class="t l k" style="left:9.20px;top:293.50px;width:50.00px;height:14.00px;line-height:14.00px;color:#8a1c1c;">국고<span class="e">3Y</span></div>
<div class="t l k" style="left:51.30px;top:293.50px;width:50.00px;height:14.00px;line-height:14.00px;color:#c636c6;">국고<span class="e">5Y</span></div>
<div class="t l k" style="left:93.40px;top:293.50px;width:50.00px;height:14.00px;line-height:14.00px;color:#1c1c5e;">국고<span class="e">10Y</span></div>
<div class="t l n" style="left:506.30px;top:537.81px;width:40.00px;height:14.00px;line-height:14.00px;">3,700</div>
<div class="t l n" style="left:506.30px;top:506.58px;width:40.00px;height:14.00px;line-height:14.00px;">3,800</div>
<div class="t l n" style="left:506.30px;top:475.35px;width:40.00px;height:14.00px;line-height:14.00px;">3,900</div>
<div class="t l n" style="left:506.30px;top:444.12px;width:40.00px;height:14.00px;line-height:14.00px;">4,000</div>
<div class="t l n" style="left:506.30px;top:412.89px;width:40.00px;height:14.00px;line-height:14.00px;">4,100</div>
<div class="t l n" style="left:506.30px;top:381.66px;width:40.00px;height:14.00px;line-height:14.00px;">4,200</div>
<div class="t l n" style="left:506.30px;top:350.43px;width:40.00px;height:14.00px;line-height:14.00px;">4,300</div>
<div class="t l n" style="left:506.30px;top:319.20px;width:40.00px;height:14.00px;line-height:14.00px;">4,400</div>
<div class="t l" style="left:16.80px;top:581.60px;width:50.00px;height:14.00px;line-height:14.00px;">08</div>
<div class="t l" style="left:72.80px;top:581.60px;width:50.00px;height:14.00px;line-height:14.00px;">09</div>
<div class="t l" style="left:104.80px;top:581.60px;width:50.00px;height:14.00px;line-height:14.00px;">09/07</div>
<div class="t l" style="left:152.80px;top:581.60px;width:50.00px;height:14.00px;line-height:14.00px;">09/15</div>
<div class="t l" style="left:224.80px;top:581.60px;width:50.00px;height:14.00px;line-height:14.00px;">10</div>
<div class="t l" style="left:256.80px;top:581.60px;width:50.00px;height:14.00px;line-height:14.00px;">10/11</div>
<div class="t l" style="left:304.80px;top:581.60px;width:50.00px;height:14.00px;line-height:14.00px;">10/19</div>
<div class="t l" style="left:376.80px;top:581.60px;width:50.00px;height:14.00px;line-height:14.00px;">11</div>
<div class="t l" style="left:408.80px;top:581.60px;width:50.00px;height:14.00px;line-height:14.00px;">11/07</div>
<div class="t l" style="left:491.80px;top:581.60px;width:50.00px;height:14.00px;line-height:14.00px;">11/21</div>
<div class="t hc k" style="left:543.80px;top:291.60px;width:85.90px;height:25.40px;line-height:25.40px;">국고<span class="e">10Y</span></div>
<div class="t hc k" style="left:636.70px;top:291.60px;width:84.70px;height:25.40px;line-height:25.40px;"><span class="e">11</span>시<span class="e">30</span>분</div>
<div class="t hc k" style="left:721.40px;top:291.60px;width:85.40px;height:25.40px;line-height:25.40px;"><span class="e">16</span>시<span class="e">00</span>분</div>
<div class="t hc k" style="left:807.10px;top:291.60px;width:83.80px;height:25.40px;line-height:25.40px;letter-spacing:0.6px;">전기</div>
<div class="t hc k" style="left:890.90px;top:291.60px;width:84.00px;height:25.40px;line-height:25.40px;letter-spacing:0.6px;">전기대비</div>
<div class="t c d" style="left:550.80px;top:315.70px;width:85.90px;height:25.35px;line-height:25.35px;">23/11/20</div>
<div class="t r n" style="left:636.70px;top:315.70px;width:76.20px;height:25.35px;line-height:25.35px;">3,769</div>
<div class="t r n" style="left:721.40px;top:315.70px;width:76.90px;height:25.35px;line-height:25.35px;">3,755</div>
<div class="t r n" style="left:806.80px;top:315.70px;width:75.30px;height:25.35px;line-height:25.35px;">3,796</div>
<div class="t r n" style="left:890.60px;top:315.70px;width:78.70px;height:25.35px;line-height:25.35px;color:#14146e;"><span class="m">-</span>0,041</div>
<div class="t c d" style="left:550.80px;top:341.05px;width:85.90px;height:25.35px;line-height:25.35px;">23/11/17</div>
<div class="t r n" style="left:636.70px;top:341.05px;width:76.20px;height:25.35px;line-height:25.35px;">3,740</div>
<div class="t r n" style="left:721.40px;top:341.05px;width:76.90px;height:25.35px;line-height:25.35px;">3,796</div>
<div class="t r n" style="left:806.80px;top:341.05px;width:75.30px;height:25.35px;line-height:25.35px;">3,799</div>
<div class="t r n" style="left:890.60px;top:341.05px;width:78.70px;height:25.35px;line-height:25.35px;color:#14146e;"><span class="m">-</span>0,003</div>
<div class="t c d" style="left:550.80px;top:366.40px;width:85.90px;height:25.35px;line-height:25.35px;">23/11/16</div>
<div class="t r n" style="left:636.70px;top:366.40px;width:76.20px;height:25.35px;line-height:25.35px;">3,824</div>
<div class="t r n" style="left:721.40px;top:366.40px;width:76.90px;height:25.35px;line-height:25.35px;">3,799</div>
<div class="t r n" style="left:806.80px;top:366.40px;width:75.30px;height:25.35px;line-height:25.35px;">3,815</div>
<div class="t r n" style="left:890.60px;top:366.40px;width:78.70px;height:25.35px;line-height:25.35px;color:#14146e;"><span class="m">-</span>0,016</div>
<div class="t c d" style="left:550.80px;top:391.75px;width:85.90px;height:25.35px;line-height:25.35px;">23/11/15</div>
<div class="t r n" style="left:636.70px;top:391.75px;width:76.20px;height:25.35px;line-height:25.35px;">3,839</div>
<div class="t r n" style="left:721.40px;top:391.75px;width:76.90px;height:25.35px;line-height:25.35px;">3,815</div>
<div class="t r n" style="left:806.80px;top:391.75px;width:75.30px;height:25.35px;line-height:25.35px;">3,980</div>
<div class="t r n" style="left:890.60px;top:391.75px;width:78.70px;height:25.35px;line-height:25.35px;color:#14146e;"><span class="m">-</span>0,165</div>
<div class="t c d" style="left:550.80px;top:417.10px;width:85.90px;height:25.35px;line-height:25.35px;">23/11/14</div>
<div class="t r n" style="left:636.70px;top:417.10px;width:76.20px;height:25.35px;line-height:25.35px;">3,999</div>
<div class="t r n" style="left:721.40px;top:417.10px;width:76.90px;height:25.35px;line-height:25.35px;">3,980</div>
<div class="t r n" style="left:806.80px;top:417.10px;width:75.30px;height:25.35px;line-height:25.35px;">4,005</div>
<div class="t r n" style="left:890.60px;top:417.10px;width:78.70px;height:25.35px;line-height:25.35px;color:#14146e;"><span class="m">-</span>0,025</div>
<div class="t c d" style="left:550.80px;top:442.45px;width:85.90px;height:25.35px;line-height:25.35px;">23/11/13</div>
<div class="t r n" style="left:636.70px;top:442.45px;width:76.20px;height:25.35px;line-height:25.35px;">4,010</div>
<div class="t r n" style="left:721.40px;top:442.45px;width:76.90px;height:25.35px;line-height:25.35px;">4,005</div>
<div class="t r n" style="left:806.80px;top:442.45px;width:75.30px;height:25.35px;line-height:25.35px;">3,969</div>
<div class="t r n" style="left:890.60px;top:442.45px;width:78.70px;height:25.35px;line-height:25.35px;color:#9c1414;">0,036</div>
<div class="t c d" style="left:550.80px;top:467.80px;width:85.90px;height:25.35px;line-height:25.35px;">23/11/10</div>
<div class="t r n" style="left:636.70px;top:467.80px;width:76.20px;height:25.35px;line-height:25.35px;">3,994</div>
<div class="t r n" style="left:721.40px;top:467.80px;width:76.90px;height:25.35px;line-height:25.35px;">3,969</div>
<div class="t r n" style="left:806.80px;top:467.80px;width:75.30px;height:25.35px;line-height:25.35px;">3,945</div>
<div class="t r n" style="left:890.60px;top:467.80px;width:78.70px;height:25.35px;line-height:25.35px;color:#9c1414;">0,024</div>
<div class="t c d" style="left:550.80px;top:493.15px;width:85.90px;height:25.35px;line-height:25.35px;">23/11/09</div>
<div class="t r n" style="left:636.70px;top:493.15px;width:76.20px;height:25.35px;line-height:25.35px;">3,950</div>
<div class="t r n" style="left:721.40px;top:493.15px;width:76.90px;height:25.35px;line-height:25.35px;">3,945</div>
<div class="t r n" style="left:806.80px;top:493.15px;width:75.30px;height:25.35px;line-height:25.35px;">4,022</div>
<div class="t r n" style="left:890.60px;top:493.15px;width:78.70px;height:25.35px;line-height:25.35px;color:#14146e;"><span class="m">-</span>0,077</div>
<div class="t c d" style="left:550.80px;top:518.50px;width:85.90px;height:25.35px;line-height:25.35px;">23/11/08</div>
<div class="t r n" style="left:636.70px;top:518.50px;width:76.20px;height:25.35px;line-height:25.35px;">3,996</div>
<div class="t r n" style="left:721.40px;top:518.50px;width:76.90px;height:25.35px;line-height:25.35px;">4,022</div>
<div class="t r n" style="left:806.80px;top:518.50px;width:75.30px;height:25.35px;line-height:25.35px;">4,055</div>
<div class="t r n" style="left:890.60px;top:518.50px;width:78.70px;height:25.35px;line-height:25.35px;color:#14146e;"><span class="m">-</span>0,033</div>
<div class="t c d" style="left:550.80px;top:543.85px;width:85.90px;height:25.35px;line-height:25.35px;">23/11/07</div>
<div class="t r n" style="left:636.70px;top:543.85px;width:76.20px;height:25.35px;line-height:25.35px;">4,066</div>
<div class="t r n" style="left:721.40px;top:543.85px;width:76.90px;height:25.35px;line-height:25.35px;">4,055</div>
<div class="t r n" style="left:806.80px;top:543.85px;width:75.30px;height:25.35px;line-height:25.35px;">4,056</div>
<div class="t r n" style="left:890.60px;top:543.85px;width:78.70px;height:25.35px;line-height:25.35px;color:#14146e;"><span class="m">-</span>0,001</div>
<div class="t c d" style="left:550.80px;top:569.20px;width:85.90px;height:25.35px;line-height:25.35px;">23/11/06</div>
<div class="t r n" style="left:636.70px;top:569.20px;width:76.20px;height:25.35px;line-height:25.35px;">4,049</div>
<div class="t r n" style="left:721.40px;top:569.20px;width:76.90px;height:25.35px;line-height:25.35px;">4,056</div>
<div class="t r n" style="left:806.80px;top:569.20px;width:75.30px;height:25.35px;line-height:25.35px;">4,105</div>
<div class="t r n" style="left:890.60px;top:569.20px;width:78.70px;height:25.35px;line-height:25.35px;color:#14146e;"><span class="m">-</span>0,049</div>
</div></body></html>
